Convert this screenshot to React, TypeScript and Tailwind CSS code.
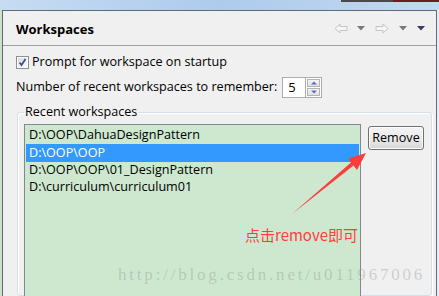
import React from "react";

const font = { fontFamily: '"Open Sans", "Noto Sans", sans-serif' };

const items = [
  "D:\\OOP\\DahuaDesignPattern",
  "D:\\OOP\\OOP",
  "D:\\OOP\\OOP\\01_DesignPattern",
  "D:\\curriculum\\curriculum01",
];

function NavArrow({ flip }: { flip?: boolean }) {
  return (
    <svg width="14" height="11" viewBox="0 0 14 11" className={flip ? "-scale-x-100" : ""}>
      <path
        d="M1 5.5 L6 1 L6 3.5 L13 3.5 L13 7.5 L6 7.5 L6 10 Z"
        fill="#f6f6f6"
        stroke="#c4c4c4"
        strokeWidth="1"
        strokeLinejoin="round"
      />
    </svg>
  );
}

function Tri({ color }: { color: string }) {
  return (
    <svg width="8" height="5" viewBox="0 0 8 5">
      <path d="M0 0 H8 L4 4.5 Z" fill={color} />
    </svg>
  );
}

function Checkbox() {
  return (
    <div className="w-[13px] h-[13px] border border-[#8f8f8f] bg-white p-[1px]">
      <div className="w-full h-full bg-gradient-to-br from-[#dcdcdc] to-[#fbfbfb] relative">
        <svg width="11" height="11" viewBox="0 0 11 11" className="absolute -left-[1px] -top-[1px]">
          <path d="M2.5 5.5 L4.5 8 L8.5 2" fill="none" stroke="#3c4f8f" strokeWidth="1.8" />
        </svg>
      </div>
    </div>
  );
}

function Spinner() {
  return (
    <div className="flex h-[21px]">
      <div className="w-[24px] h-full border border-[#abadb3] bg-white flex items-center pl-[5px] text-[13px] text-black">
        5
      </div>
      <div className="w-[16px] h-full flex flex-col border border-l-0 border-[#abadb3] bg-white p-[1px] gap-[1px]">
        <div className="flex-1 border border-[#b4b4b4] bg-gradient-to-b from-[#f4f4f4] to-[#e0e0e0] flex items-center justify-center">
          <svg width="6" height="4" viewBox="0 0 6 4">
            <path d="M0 3.5 L3 0.5 L6 3.5 Z" fill="#5a6cc0" />
          </svg>
        </div>
        <div className="flex-1 border border-[#b4b4b4] bg-gradient-to-b from-[#f4f4f4] to-[#e0e0e0] flex items-center justify-center">
          <svg width="6" height="4" viewBox="0 0 6 4">
            <path d="M0 0.5 L3 3.5 L6 0.5 Z" fill="#5a6cc0" />
          </svg>
        </div>
      </div>
    </div>
  );
}

export default function App() {
  return (
    <div className="w-[439px] h-[296px] overflow-hidden relative bg-[#f0f0f0] flex flex-col" style={font}>
      <div className="h-[10px] shrink-0 bg-gradient-to-r from-[#c6dcf2] via-[#aecbeb] to-[#c3d9ef] flex">
        <div className="flex-1" />
        <div className="w-[98px] h-[2px] bg-[#4a4a4a] flex justify-end">
          <div className="w-[46px] h-full bg-[#6b1e1e]" />
        </div>
      </div>
      <div className="flex flex-1 min-h-0">
        <div className="w-[2px] bg-[#c9e3c5] shrink-0" />
        <div className="flex-1 min-w-0 border-t border-l border-r border-[#5f6b78] flex flex-col">
          <div className="h-[35px] shrink-0 flex items-center pl-[13px] pr-[11px] pt-[3px] border-b border-[#a0a0a0]">
            <span className="font-bold text-[13px] text-black">Workspaces</span>
            <div className="flex-1" />
            <div className="flex items-center -mt-[3px]">
              <NavArrow />
              <div className="ml-[9px]">
                <Tri color="#7a7a7a" />
              </div>
              <div className="ml-[10px]">
                <NavArrow flip />
              </div>
              <div className="ml-[10px]">
                <Tri color="#7a7a7a" />
              </div>
              <div className="ml-[10px]">
                <Tri color="#3a3a66" />
              </div>
            </div>
          </div>
          <div className="pl-[13px] pt-[8px] flex items-center gap-[3px] h-[24px] text-[12.6px] text-black">
            <Checkbox />
            <span>Prompt for workspace on startup</span>
          </div>
          <div className="pl-[13px] mt-[7px] flex items-center gap-[5px] text-[12.6px] text-black">
            <span>Number of recent workspaces to remember:</span>
            <Spinner />
          </div>
          <fieldset className="ml-[14px] mr-[4px] mt-[6px] flex-1 border border-[#d5dfe5] rounded-[3px] pl-[6px] pr-[7px] pt-[4px] min-h-0 flex gap-[7px] shadow-[inset_1px_1px_0_#ffffff,1px_1px_0_#ffffff]">
            <legend className="ml-0 px-[1px] text-[12.6px] text-black leading-[16px]">
              Recent workspaces
            </legend>
            <div className="w-[337px] shrink-0 border border-[#828790] bg-[#cde8cf] pt-[2px] pl-[1px] pr-[1px] -mb-[40px] text-[12.6px] text-black">
              {items.map((it, i) => (
                <div
                  key={it}
                  className={`h-[17.3px] flex items-center pl-[3px] ${i === 1 ? "bg-[#3399ff] text-white" : ""}`}
                >
                  {it}
                </div>
              ))}
            </div>
            <div className="pt-[2px]">
              <button className="w-[56px] h-[24px] rounded-[3px] border border-[#707070] bg-gradient-to-b from-[#f3f3f3] via-[#ebebeb] to-[#d6d6d6] shadow-[inset_0_0_0_1px_#fcfcfc] text-[12.6px] text-black flex items-center justify-center">
                Remove
              </button>
            </div>
          </fieldset>
        </div>
        <div className="w-[2px] bg-[#e6eef5] shrink-0" />
      </div>

      <svg className="absolute left-0 top-0 pointer-events-none" width="439" height="296">
        <polygon
          points="366,153 348.5,158.5 351,162.5 292,214 353.5,165.5 357,170"
          fill="#ff3b3b"
        />
      </svg>
      <div
        className="absolute left-[245px] top-[225px] text-[15px] leading-[20px] text-[#ff3c3c] whitespace-nowrap"
        style={{ fontFamily: '"Noto Sans CJK SC", "Noto Sans", sans-serif' }}
      >
        点击remove即可
      </div>
      <div
        className="absolute left-[118px] top-[264px] text-[17px] leading-[22px] tracking-[2.8px] text-[#8a8a8a]/35 whitespace-nowrap"
        style={{ fontFamily: '"Liberation Serif", serif' }}
      >
        http://blog.csdn.net/u011967006
      </div>
    </div>
  );
}
